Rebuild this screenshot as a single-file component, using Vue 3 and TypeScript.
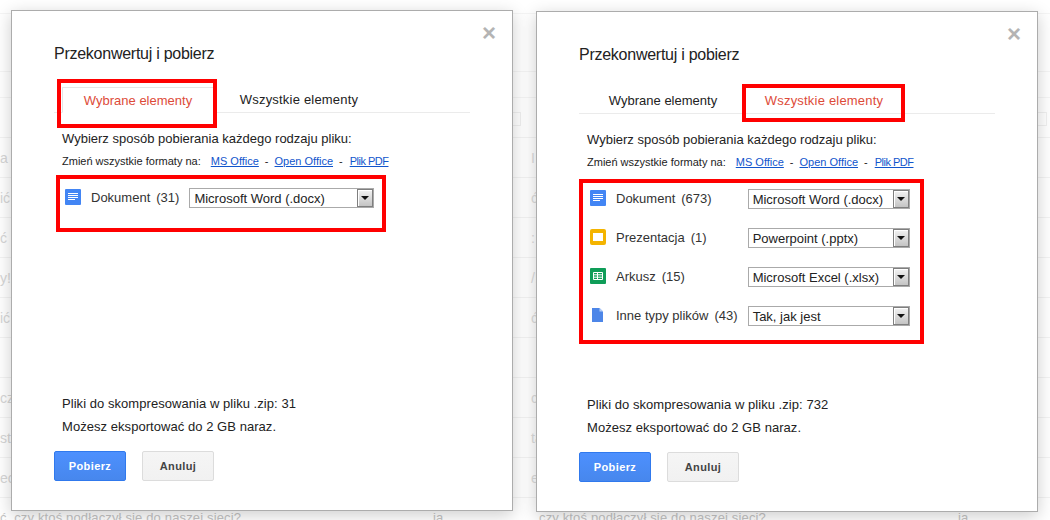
<script setup lang="ts">
type Icon = 'doc' | 'slides' | 'sheet' | 'file'
interface Row { icon: Icon; label: string; count: number; value: string }
interface Dialog {
  id: string
  selected: number
  total: number
  wide: boolean
  rows: Row[]
}

const dialogs: Dialog[] = [
  {
    id: 'left',
    selected: 0,
    total: 31,
    wide: true,
    rows: [{ icon: 'doc', label: 'Dokument', count: 31, value: 'Microsoft Word (.docx)' }],
  },
  {
    id: 'right',
    selected: 1,
    total: 732,
    wide: false,
    rows: [
      { icon: 'doc', label: 'Dokument', count: 673, value: 'Microsoft Word (.docx)' },
      { icon: 'slides', label: 'Prezentacja', count: 1, value: 'Powerpoint (.pptx)' },
      { icon: 'sheet', label: 'Arkusz', count: 15, value: 'Microsoft Excel (.xlsx)' },
      { icon: 'file', label: 'Inne typy plików', count: 43, value: 'Tak, jak jest' },
    ],
  },
]
const tabs = ['Wybrane elementy', 'Wszystkie elementy']
const backRows = [
  ['', ''],
  ['a I', 'I'],
  ['ić', 'ć'],
  ['ć', ':'],
  ['y!', '/!'],
  ['ić', 'ć'],
  ['', ''],
  ['cz', 'cz'],
  ['sta', 'ta'],
  ['ec', 'ec'],
]
</script>

<template>
  <main class="page">
    <div class="backdrop" aria-hidden="true">
      <div class="back-head"></div>
      <div class="back-head tall"></div>
      <div class="back-head mid"></div>
      <div v-for="(t, i) in backRows" :key="i" class="back-row">
        <span>{{ t[0] }}</span>
        <span class="back-right">{{ t[1] }}</span>
      </div>
      <div class="back-last">
        <span class="last-a">ć, czy ktoś podłączył się do naszej sieci?</span>
        <span class="last-b">ja</span>
        <span class="last-c">czy ktoś podłączył się do naszej sieci?</span>
        <span class="last-d">ja</span>
      </div>
      <i class="back-box box-a"></i>
      <i class="back-box box-b"></i>
    </div>

    <section v-for="d in dialogs" :key="d.id" class="dialog" :class="d.id">
      <span class="close">×</span>
      <h1 class="title">Przekonwertuj i pobierz</h1>
      <div class="tabs">
        <div
          v-for="(t, i) in tabs"
          :key="t"
          class="tab"
          :class="{ active: i === d.selected, boxed: d.id === 'left' && i === 0 }"
        >{{ t }}</div>
      </div>
      <p class="lead">Wybierz sposób pobierania każdego rodzaju pliku:</p>
      <p class="change">
        <span>Zmień wszystkie formaty na:</span>
        <a class="link">MS Office</a><span class="dash">-</span><a class="link">Open Office</a><span class="dash">-</span><a class="link pdf">Plik PDF</a>
      </p>
      <div class="rows">
        <template v-for="r in d.rows" :key="r.icon">
          <svg class="icon" viewBox="0 0 16 16" width="16" height="16">
            <template v-if="r.icon === 'doc'">
              <rect width="16" height="16" rx="1" fill="#4285f4" />
              <path d="M3 4.5h10M3 6.5h10M3 8.5h10M3 10.5h7" stroke="#fff" stroke-width="1" />
            </template>
            <template v-else-if="r.icon === 'slides'">
              <rect width="16" height="16" rx="2" fill="#f4b400" />
              <rect x="3" y="4" width="10" height="8" fill="#fff" />
            </template>
            <template v-else-if="r.icon === 'sheet'">
              <rect width="16" height="16" rx="1" fill="#0f9d58" />
              <path d="M3.5 4.5h9v7h-9zM3.5 6.8h9M3.5 9.2h9M7.5 4.5v7" fill="none" stroke="#fff" stroke-width="1" />
            </template>
            <template v-else>
              <path d="M2 1h7.5L13 4.5V15H2z" fill="#4d86e8" />
              <path d="M9.5 1L13 4.5H9.5z" fill="#b4cdf6" />
            </template>
          </svg>
          <span class="label">{{ r.label }}<span class="count">({{ r.count }})</span></span>
          <div class="select" :class="{ wide: d.wide }">
            <span class="value">{{ r.value }}</span>
            <span class="arrow"><i></i></span>
          </div>
        </template>
      </div>
      <div class="spacer"></div>
      <p class="info">Pliki do skompresowania w pliku .zip: {{ d.total }}</p>
      <p class="info second">Możesz eksportować do 2 GB naraz.</p>
      <div class="actions">
        <button class="btn primary" type="button">Pobierz</button>
        <button class="btn" type="button">Anuluj</button>
      </div>
      <div class="mark" :class="d.id === 'left' ? 'mark-tab-l' : 'mark-tab-r'"></div>
      <div class="mark" :class="d.id === 'left' ? 'mark-rows-l' : 'mark-rows-r'"></div>
    </section>
  </main>
</template>

<style scoped>
.page {
  position: relative;
  width: 1050px;
  height: 520px;
  overflow: hidden;
  background: #fff;
  font-family: "Liberation Sans", Arial, sans-serif;
  color: #222;
}
.backdrop { display: flex; flex-direction: column; color: #d6d6d6; font-size: 14px; }
.back-head { height: 14px; border-bottom: 1px solid #f5f5f5; box-sizing: border-box; }
.back-head.tall { height: 58px; }
.back-head.mid { height: 26px; }
.back-row {
  height: 40px;
  box-sizing: border-box;
  border-bottom: 1px solid #f3f3f3;
  display: grid;
  grid-template-columns: 525px 1fr;
  align-items: center;
  white-space: nowrap;
}
.back-right { padding-left: 6px; color: #dcdcdc; }
.back-last {
  position: relative;
  height: 23px;
  white-space: nowrap;
  color: #c4c4c4;
  font-size: 13px;
  letter-spacing: 0.15px;
}
.last-a, .last-b, .last-c, .last-d { position: absolute; top: 12px; }
.last-a { left: 0; }
.last-b { left: 433px; }
.last-c { left: 539px; }
.last-d { left: 958px; }
.back-box {
  position: absolute;
  top: 112px;
  width: 16px;
  height: 12px;
  border: 1px solid #f0f0f0;
}
.box-a { left: 503px; }
.box-b { left: 1029px; }

.dialog {
  position: absolute;
  width: 502px;
  height: 501px;
  box-sizing: border-box;
  padding: 0 42px;
  background: #fff;
  border: 1px solid #acacac;
  box-shadow: 0 4px 16px rgba(0, 0, 0, 0.2);
  display: flex;
  flex-direction: column;
}
.dialog.left { left: 11px; top: 10px; }
.dialog.right { left: 536px; top: 11px; }
.close {
  position: absolute;
  right: 16px;
  top: 14px;
  font: bold 24px/16px "Liberation Sans", Arial, sans-serif;
  color: #b4b4b4;
}
.title {
  margin: 33px 0 0;
  font-size: 16px;
  line-height: 20px;
  font-weight: 400;
  letter-spacing: -0.26px;
  color: #222;
}
.tabs {
  margin-top: 23px;
  height: 26px;
  width: 416px;
  box-sizing: border-box;
  border-bottom: 1px solid #ebebeb;
  display: flex;
  padding-left: 8px;
}
.tab {
  height: 26px;
  width: 152px;
  box-sizing: border-box;
  padding-top: 5px;
  font-size: 13px;
  line-height: 16px;
  text-align: center;
  color: #222;
}
.tab + .tab { width: 170px; letter-spacing: 0.2px; }
.tab.active { color: #dd4b39; }
.tab.boxed {
  border: 1px solid #e5e5e5;
  border-bottom: 1px solid #fff;
}
.lead {
  margin: 18px 0 0 8px;
  font-size: 13px;
  line-height: 16px;
}
.change {
  margin: 7px 0 0 8px;
  font-size: 11px;
  line-height: 14px;
  display: flex;
}
.link { color: #15c; text-decoration: underline; margin-left: 9px; }
.link:first-of-type { margin-left: 10px; }
.link.pdf { letter-spacing: -0.5px; margin-left: 10px; }
.dash { margin-left: 6px; margin-right: -3px; color: #222; }
.rows {
  margin: 20px 0 0 11px;
  display: grid;
  grid-template-columns: 16px auto auto;
  justify-content: start;
  align-items: center;
  column-gap: 10px;
  row-gap: 19px;
}
.icon { display: block; margin-top: -2px; }
.label { font-size: 13px; line-height: 20px; color: #333; white-space: nowrap; }
.count { margin-left: 6px; }
.select {
  width: 162px;
  height: 20px;
  box-sizing: border-box;
  border: 1px solid #aaa;
  display: flex;
  align-items: center;
  justify-content: space-between;
  background: #fff;
}
.select.wide { width: 185px; }
.value {
  padding-left: 4px;
  font-size: 13px;
  color: #222;
  white-space: nowrap;
}
.arrow {
  width: 16px;
  height: 18px;
  box-sizing: border-box;
  border: 1px solid #7f7f7f;
  background: linear-gradient(#f2f2f2, #c4c4c4);
  box-shadow: inset 1px 1px #fff;
  display: flex;
  align-items: center;
  justify-content: center;
}
.arrow i {
  width: 0;
  height: 0;
  border-left: 4px solid transparent;
  border-right: 4px solid transparent;
  border-top: 4px solid #111;
}
.spacer { flex: 1; }
.info {
  margin: 0 0 0 8px;
  font-size: 13px;
  line-height: 16px;
  letter-spacing: 0.05px;
}
.info.second { margin-top: 7px; }
.actions { margin: 16px 0 29px; display: flex; gap: 16px; }
.btn {
  width: 72px;
  height: 30px;
  padding: 0;
  box-sizing: border-box;
  border: 1px solid #dcdcdc;
  border-radius: 2px;
  background: linear-gradient(#f5f5f5, #f1f1f1);
  color: #444;
  font: bold 11px "Liberation Sans", Arial, sans-serif;
  letter-spacing: 0.4px;
}
.btn.primary {
  border-color: #3079ed;
  background: linear-gradient(#4d90fe, #4787ed);
  color: #fff;
}
.mark { position: absolute; box-sizing: border-box; border: 4px solid #f00; pointer-events: none; }
.mark-tab-l { left: 45px; top: 68px; width: 160px; height: 49px; }
.mark-rows-l { left: 44px; top: 164px; width: 330px; height: 57px; }
.mark-tab-r { left: 205px; top: 72px; width: 163px; height: 38px; }
.mark-rows-r { left: 42px; top: 167px; width: 345px; height: 165px; }
</style>
